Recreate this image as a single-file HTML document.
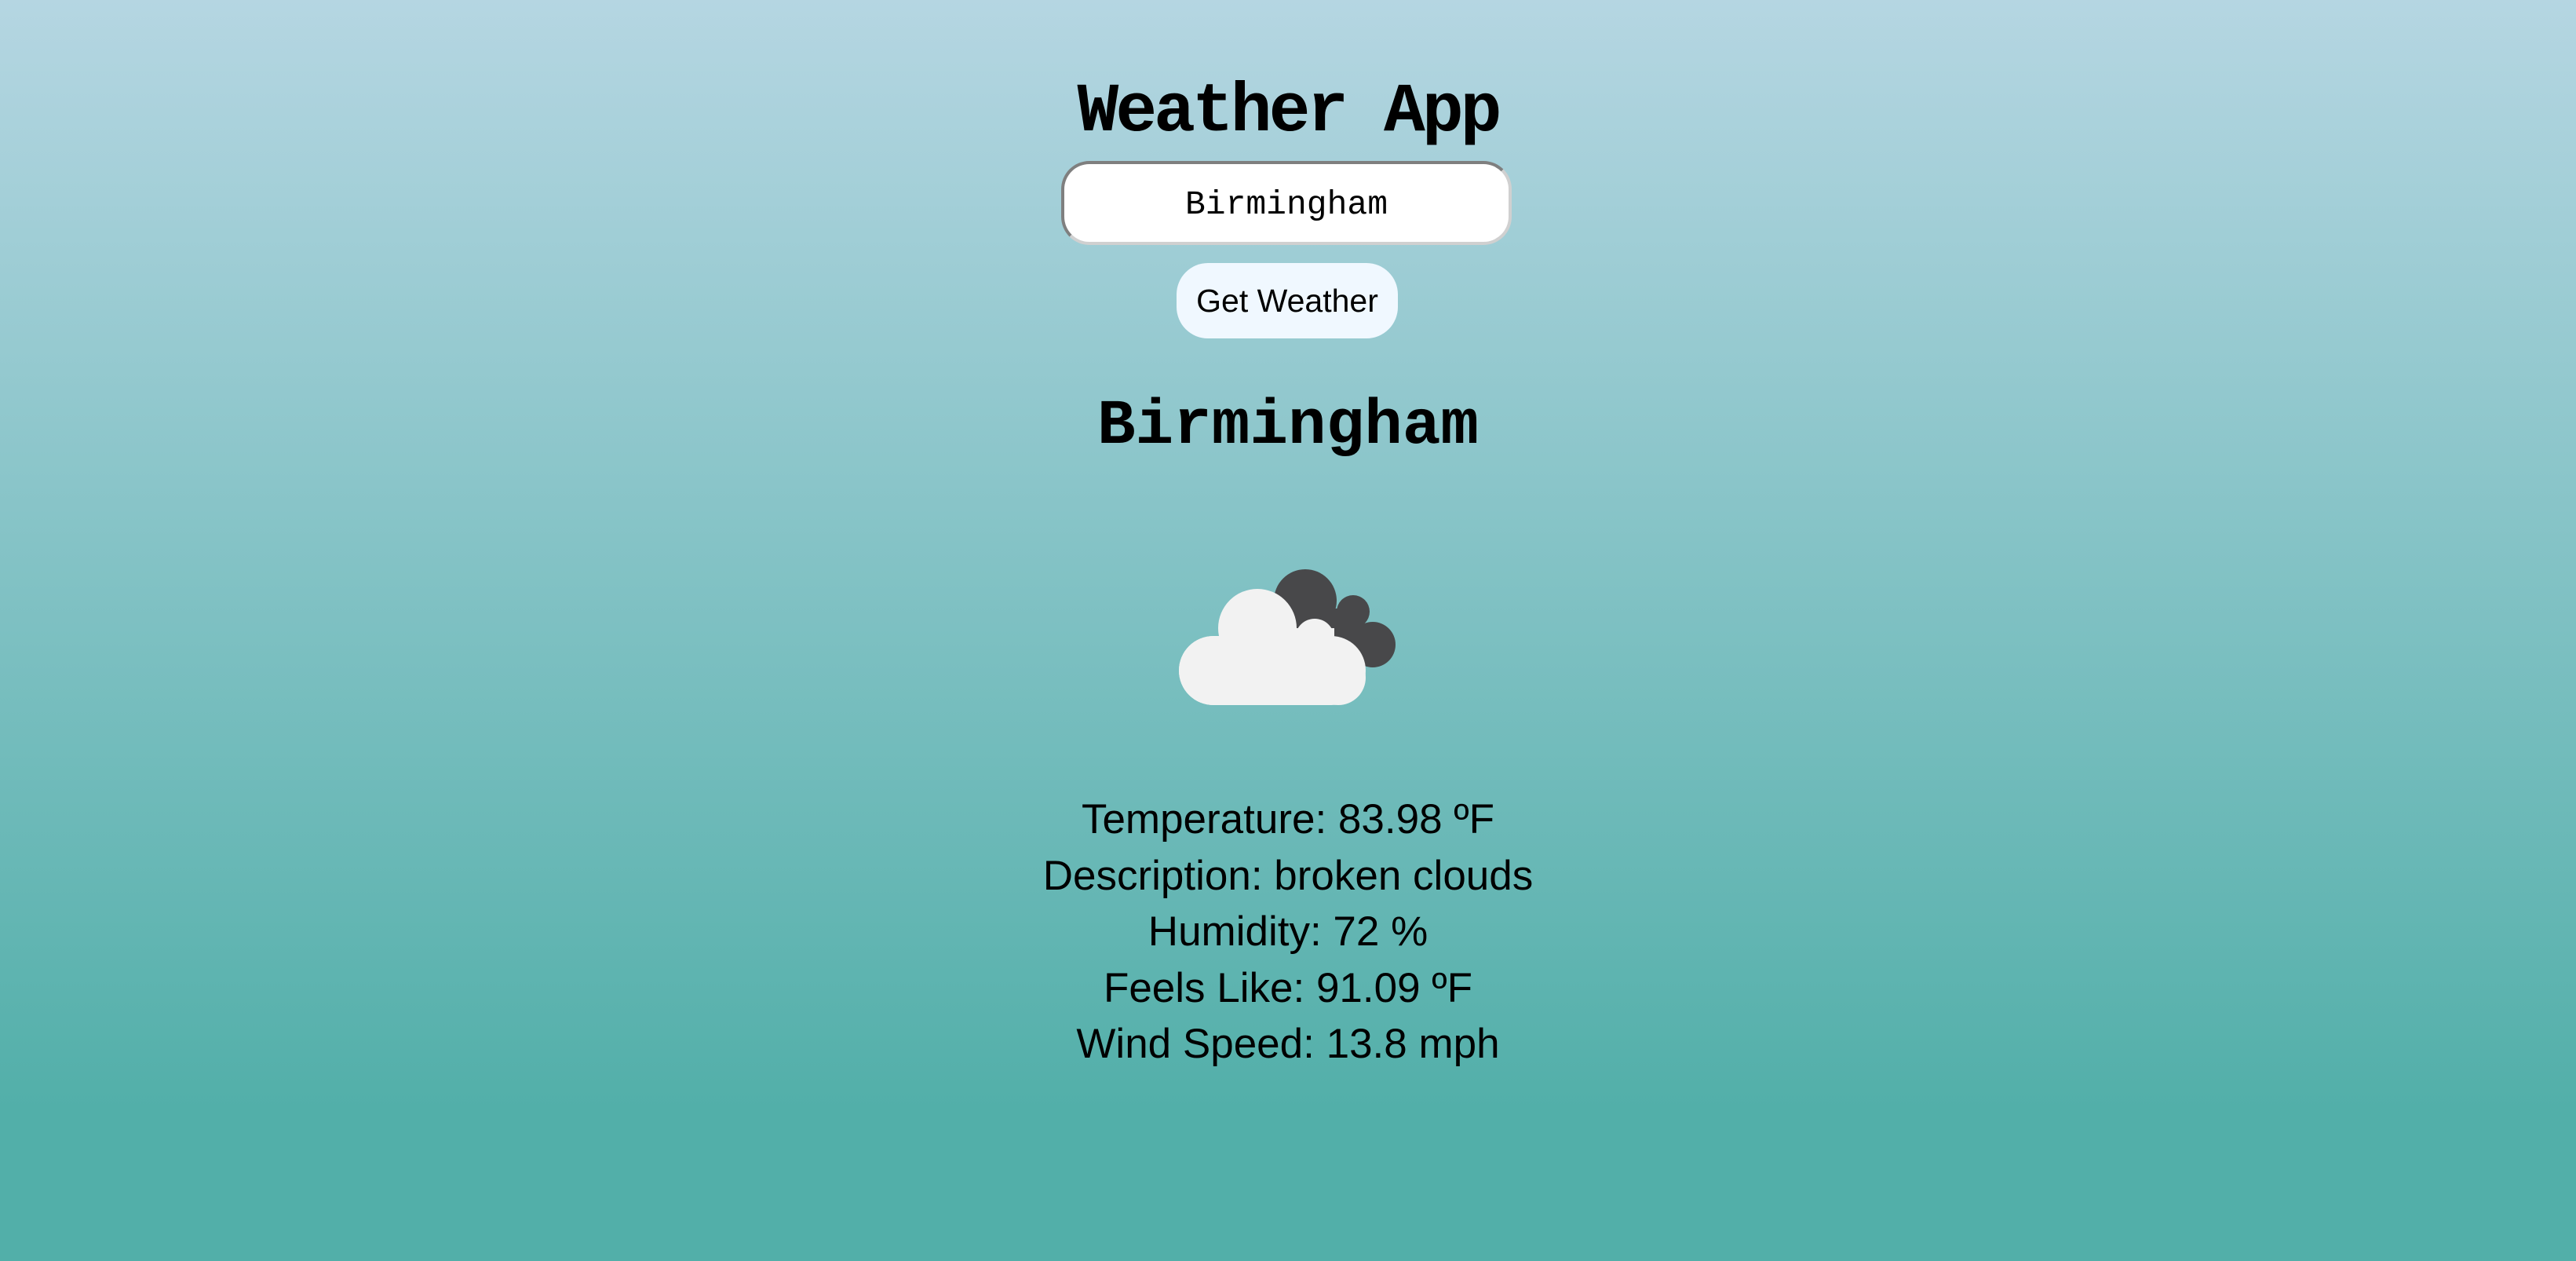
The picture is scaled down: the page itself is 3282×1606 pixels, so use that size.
<!DOCTYPE html>
<html><head><meta charset="utf-8"><style>
html,body{margin:0;padding:0;width:3282px;height:1606px;overflow:hidden}
body{background:linear-gradient(to bottom,#b5d6e2 0%,#52afa9 88%,#52afa9 100%);position:relative;font-family:"Liberation Sans",sans-serif;color:#000}
.c{position:absolute;left:0;width:3282px;text-align:center;white-space:nowrap}
.title{top:94px;font-family:"Liberation Mono",monospace;font-weight:bold;font-size:88px;letter-spacing:-4px;line-height:100px}
.input{position:absolute;left:1352px;top:205px;width:566px;height:99px;border:4px solid #7f7f7f;border-right-color:#d0d0d0;border-bottom-color:#d0d0d0;border-radius:36px;background:#fff;font-family:"Liberation Mono",monospace;font-size:43px;text-align:center;line-height:103px}
.btn{position:absolute;left:1499px;top:335px;width:282px;height:96px;border-radius:40px;background:#f0f8ff;font-size:41px;text-align:center;line-height:96px}
.city{top:494px;font-family:"Liberation Mono",monospace;font-weight:bold;font-size:81px;line-height:100px}
.info{top:1008px;font-size:53px;line-height:71.5px}
</style></head><body>
<div class="c title">Weather App</div>
<div class="input">Birmingham</div>
<div class="btn">Get Weather</div>
<div class="c city">Birmingham</div>
<svg style="position:absolute;left:0;top:0" width="3282" height="1606">
<g fill="#48484a"><circle cx="1663" cy="765" r="40"/><circle cx="1724" cy="779" r="21"/><circle cx="1749" cy="821" r="29"/><rect x="1640" y="775" width="95" height="70"/></g>
<g fill="#f2f2f2"><circle cx="1602" cy="800" r="50"/><circle cx="1675" cy="813" r="25"/><rect x="1502" y="810" width="238" height="88" rx="44"/><rect x="1560" y="800" width="140" height="60"/><circle cx="1705" cy="863" r="35"/><circle cx="1546" cy="854" r="44"/></g>
</svg>
<div class="c info">Temperature: 83.98 ºF<br>Description: broken clouds<br>Humidity: 72 %<br>Feels Like: 91.09 ºF<br>Wind Speed: 13.8 mph</div>
</body></html>
